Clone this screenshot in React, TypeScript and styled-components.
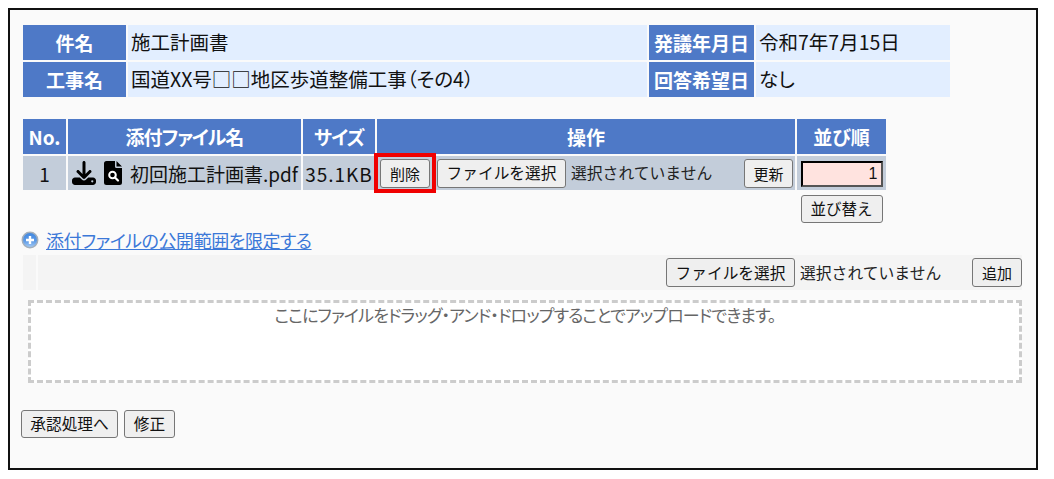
import styled, { createGlobalStyle } from "styled-components";
import { FaDownload } from "react-icons/fa6";

const GlobalStyle = createGlobalStyle`
  body {
    margin: 8px;
    background: #ffffff;
    color: #111111;
    font-family: "Noto Sans CJK JP", "Noto Sans", sans-serif;
  }
`;

const Frame = styled.div`
  box-sizing: border-box;
  width: 1030px;
  height: 462px;
  padding: 13px 14px 0 11px;
  border: 2px solid #111111;
  background: #fafafa;
`;

const Table = styled.table`
  table-layout: fixed;
  border-collapse: separate;
  border-spacing: 2px;
  width: ${(props: { $width: number }) => props.$width}px;
`;

const Label = styled.th<{ $width?: number; $tight?: boolean }>`
  width: ${(props) => (props.$width ? `${props.$width}px` : "auto")};
  height: 35px;
  padding: 0;
  background: #4e79c7;
  color: #ffffff;
  font-size: 19px;
  font-weight: 700;
  line-height: 1;
  letter-spacing: ${(props) => (props.$tight ? "-1px" : "0")};
  text-align: center;
  font-feature-settings: "palt";
  white-space: nowrap;
`;

const Value = styled.td<{ $width?: number }>`
  width: ${(props) => (props.$width ? `${props.$width}px` : "auto")};
  padding: 0 0 2px 3px;
  background: #e2eeff;
  font-size: 19.5px;
  line-height: 1;
  font-feature-settings: "palt";
  white-space: nowrap;
`;

const FileTable = styled(Table)`
  margin-top: 18px;
`;

const Cell = styled.td<{ $align?: string }>`
  height: 34px;
  padding: 0;
  background: #c3cdda;
  font-size: 19px;
  line-height: 1;
  text-align: ${(props) => props.$align ?? "left"};
  white-space: nowrap;
`;

const SizeText = styled.span`
  letter-spacing: 1px;
`;

const EmptyCell = styled.td`
  padding: 0;
`;

const NameWrap = styled.div`
  display: flex;
  align-items: center;
  padding-left: 4px;
  font-feature-settings: "palt";
`;

const IconSlot = styled.span`
  display: flex;
  margin-right: 8px;
  color: #000000;
`;

const Actions = styled.div`
  display: flex;
  align-items: center;
  padding: 0 2px 0 3px;
`;

const Button = styled.button`
  box-sizing: border-box;
  height: 29px;
  padding: 0;
  border: 1px solid #767676;
  border-radius: 3px;
  background: #efefef;
  color: #111111;
  font-family: inherit;
  font-size: 15.7px;
  line-height: 1;
  white-space: nowrap;
`;

const Highlight = styled.span`
  display: flex;
  margin: -6px 1px -5px -6px;
  padding: 2px 2px 1px;
  border: 4px solid #f00000;
`;

const DeleteButton = styled(Button)`
  width: 50px;
  font-size: 15px;
`;

const PickButton = styled(Button)`
  width: 129px;
`;

const UpdateButton = styled(Button)`
  width: 49px;
  margin-left: auto;
  font-size: 15px;
`;

const NoFile = styled.span`
  margin-left: 5px;
  font-size: 15.8px;
  color: #222222;
`;

const OrderInput = styled.input`
  display: block;
  box-sizing: border-box;
  width: 82px;
  height: 26px;
  margin: 2px auto 0;
  padding: 0 3px;
  border: 2px inset #555555;
  background: #ffe3df;
  color: #111111;
  font-family: "Liberation Sans", sans-serif;
  font-size: 16px;
  text-align: right;
`;

const SortRow = styled.div`
  display: flex;
  justify-content: center;
  padding-top: 3px;
`;

const SortButton = styled(Button)`
  width: 82px;
  height: 28px;
  font-size: 15.5px;
`;

const ScopeLink = styled.a`
  display: flex;
  align-items: center;
  height: 22px;
  margin-top: 4px;
  color: #3b78d8;
  font-size: 18px;
  letter-spacing: -0.45px;
  line-height: 1;
  font-feature-settings: "palt";
  text-decoration: underline;
  white-space: nowrap;
`;

const LinkIcon = styled.svg`
  flex: none;
  margin-right: 7px;
`;

const AddBar = styled.div`
  display: grid;
  grid-template-columns: 13px 1fr;
  column-gap: 2px;
  height: 35px;
  margin: 4px 0 0 2px;
`;

const BarCap = styled.div`
  background: #f4f4f4;
`;

const BarBody = styled.div`
  display: flex;
  align-items: center;
  justify-content: flex-end;
  background: #f4f4f4;
`;

const AddLabel = styled.span`
  width: 172px;
  margin-left: 5px;
  font-size: 15.8px;
  color: #222222;
`;

const AddButton = styled(Button)`
  width: 50px;
  font-size: 15px;
`;

const DropZone = styled.div`
  box-sizing: border-box;
  height: 83px;
  margin: 10px 0 0 7px;
  padding-top: 2px;
  border: 3px dashed #cccccc;
  background: #ffffff;
  color: #666666;
  font-size: 17px;
  letter-spacing: -0.85px;
  line-height: 20px;
  font-feature-settings: "palt";
  text-align: center;
`;

const Footer = styled.div`
  display: flex;
  gap: 6px;
  margin-top: 27px;
`;

const FootButton = styled(Button)<{ $width: number }>`
  width: ${(props) => props.$width}px;
  height: 28px;
`;

function FileSearchIcon() {
  return (
    <svg width="18" height="24" viewBox="0 0 18 24" aria-hidden="true">
      <path
        d="M2.500 0H11v5.500a1.500 1.500 0 0 0 1.500 1.500H18v14.500a2.500 2.500 0 0 1-2.500 2.500h-13A2.500 2.500 0 0 1 0 21.500v-19A2.500 2.500 0 0 1 2.500 0zM12.500 0 18 5.500h-5.500z"
        fill="#000000"
      />
      <circle cx="8.500" cy="14" r="3.300" fill="none" stroke="#ffffff" strokeWidth="2" />
      <path d="M11 16.500 14 19.500" stroke="#ffffff" strokeWidth="2.200" strokeLinecap="round" />
    </svg>
  );
}

function PlusCircleIcon() {
  return (
    <LinkIcon width="18" height="18" viewBox="0 0 18 18" aria-hidden="true">
      <defs>
        <linearGradient id="plusBall" x1="0" y1="0" x2="0" y2="1">
          <stop offset="0%" stopColor="#3f86e0" />
          <stop offset="55%" stopColor="#5c9ae6" />
          <stop offset="100%" stopColor="#a8cdf5" />
        </linearGradient>
      </defs>
      <circle cx="9" cy="9" r="7.700" fill="url(#plusBall)" stroke="#a4afbb" strokeWidth="1.500" />
      <path d="M5 9h8M9 5v8" stroke="#ffffff" strokeWidth="2.400" />
    </LinkIcon>
  );
}

export default function App() {
  return (
    <Frame>
      <GlobalStyle />
      <Table $width={931}>
        <tbody>
          <tr>
            <Label $width={103}>件名</Label>
            <Value $width={516}>施工計画書</Value>
            <Label $width={105}>発議年月日</Label>
            <Value>令和7年7月15日</Value>
          </tr>
          <tr>
            <Label>工事名</Label>
            <Value>国道XX号□□地区歩道整備工事{"\uFF08"}その4{"\uFF09"}</Value>
            <Label>回答希望日</Label>
            <Value>なし</Value>
          </tr>
        </tbody>
      </Table>

      <FileTable $width={867}>
        <tbody>
          <tr>
            <Label $width={43}>No.</Label>
            <Label $width={233} $tight>
              添付ファイル名
            </Label>
            <Label $width={72} $tight>
              サイズ
            </Label>
            <Label $width={418}>操作</Label>
            <Label>並び順</Label>
          </tr>
          <tr>
            <Cell $align="center">1</Cell>
            <Cell>
              <NameWrap>
                <IconSlot>
                  <FaDownload size={24} />
                </IconSlot>
                <IconSlot>
                  <FileSearchIcon />
                </IconSlot>
                初回施工計画書.pdf
              </NameWrap>
            </Cell>
            <Cell $align="center">
              <SizeText>35.1KB</SizeText>
            </Cell>
            <Cell>
              <Actions>
                <Highlight>
                  <DeleteButton>削除</DeleteButton>
                </Highlight>
                <PickButton>ファイルを選択</PickButton>
                <NoFile>選択されていません</NoFile>
                <UpdateButton>更新</UpdateButton>
              </Actions>
            </Cell>
            <Cell>
              <OrderInput defaultValue="1" />
            </Cell>
          </tr>
          <tr>
            <EmptyCell colSpan={4} />
            <EmptyCell>
              <SortRow>
                <SortButton>並び替え</SortButton>
              </SortRow>
            </EmptyCell>
          </tr>
        </tbody>
      </FileTable>

      <ScopeLink href="#">
        <PlusCircleIcon />
        添付ファイルの公開範囲を限定する
      </ScopeLink>

      <AddBar>
        <BarCap />
        <BarBody>
          <PickButton>ファイルを選択</PickButton>
          <AddLabel>選択されていません</AddLabel>
          <AddButton>追加</AddButton>
        </BarBody>
      </AddBar>

      <DropZone>ここにファイルをドラッグ・アンド・ドロップすることでアップロードできます。</DropZone>

      <Footer>
        <FootButton $width={97}>承認処理へ</FootButton>
        <FootButton $width={51}>修正</FootButton>
      </Footer>
    </Frame>
  );
}
